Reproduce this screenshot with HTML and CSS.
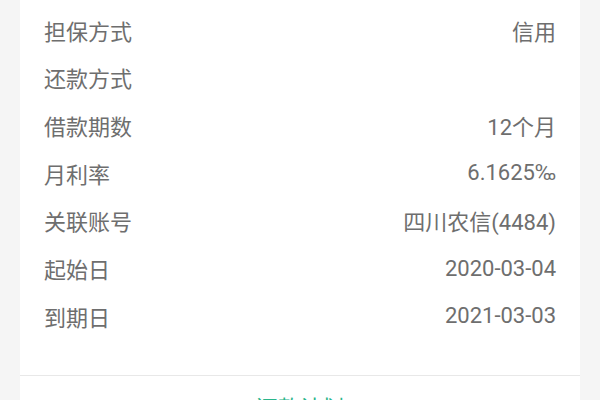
FILE: index.html
```html
<!DOCTYPE html>
<html lang="zh-CN">
<head>
<meta charset="utf-8">
<link rel="stylesheet" href="styles.css">
</head>
<body>
<div class="card">
  <div class="rows">
    <div class="row"><span class="label">担保方式</span><span class="value">信用</span></div>
    <div class="row"><span class="label">还款方式</span><span class="value"></span></div>
    <div class="row"><span class="label">借款期数</span><span class="value">12个月</span></div>
    <div class="row"><span class="label">月利率</span><span class="value">6.1625‰</span></div>
    <div class="row"><span class="label">关联账号</span><span class="value">四川农信(4484)</span></div>
    <div class="row"><span class="label">起始日</span><span class="value">2020-03-04</span></div>
    <div class="row"><span class="label">到期日</span><span class="value">2021-03-03</span></div>
  </div>
  <div class="footer"><span class="link">还款计划</span></div>
</div>
</body>
</html>
```
FILE: styles.css
```css
html, body {
  margin: 0;
  padding: 0;
  background: #f5f5f5;
  font-family: "Roboto", "Noto Sans CJK SC", sans-serif;
}
.card {
  margin: 0 20px;
  background: #ffffff;
  height: 400px;
  overflow: hidden;
}
.rows {
  padding: 6px 24px 35px 24px;
}
.row {
  height: 47.67px;
  display: flex;
  align-items: center;
  justify-content: space-between;
  font-size: 22px;
  color: #6e6e6e;
}
.footer {
  border-top: 1px solid #e8e8e8;
  height: 60px;
  display: flex;
  align-items: center;
  justify-content: center;
}
.link {
  font-size: 22px;
  color: #2bb58a;
}
```
